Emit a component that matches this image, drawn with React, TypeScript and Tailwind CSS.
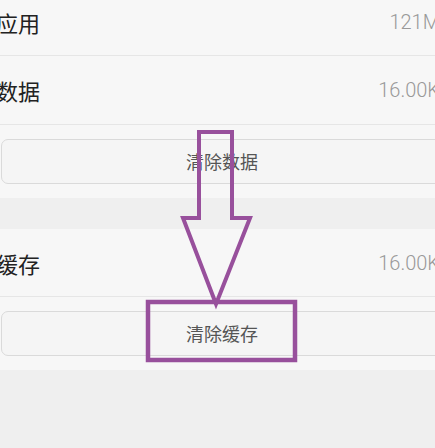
const CJK = { fontFamily: '"Noto Sans CJK SC", "Noto Sans", sans-serif' };

function Row({ label, value, last }: { label: string; value: string; last?: boolean }) {
  return (
    <div className={`flex items-center justify-between h-[68px] pr-[8px] ${last ? '' : 'border-b border-[#e6e6e6]'}`}>
      <span className="text-[22px] text-[#222] leading-none">{label}</span>
      <span className="text-[20px] text-[#999] leading-none" style={{ fontFamily: 'Roboto, "Noto Sans", sans-serif', fontWeight: 300 }}>{value}</span>
    </div>
  );
}

function ClearButton({ text }: { text: string }) {
  return (
    <div className="py-[14px] px-[5px]">
      <div className="h-[45px] rounded-[7px] border border-[#dadada] bg-[#f5f5f5] flex items-center justify-center text-[18px] text-[#555]">
        {text}
      </div>
    </div>
  );
}

export default function App() {
  return (
    <div className="relative w-[435px] h-[448px] overflow-hidden bg-[#efefef]" style={CJK}>
      <div className="w-[452px] ml-[-4px] mt-[-12px]">
        <div className="bg-[#f7f7f7]">
          <Row label="应用" value="121M" />
          <Row label="数据" value="16.00K" last />
          <div className="border-t border-[#e6e6e6]" />
          <ClearButton text="清除数据" />
        </div>
        <div className="h-[31px]" />
        <div className="bg-[#f7f7f7]">
          <Row label="缓存" value="16.00K" />
          <ClearButton text="清除缓存" />
        </div>
      </div>

      <svg className="absolute left-0 top-0 pointer-events-none" width="435" height="448" viewBox="0 0 435 448">
        <path
          d="M199 132 L232 132 L232 218 L250 218 L216 304 L183 218 L199 218 Z"
          fill="none"
          stroke="#98509c"
          strokeWidth="4"
          strokeLinejoin="miter"
        />
        <rect x="148" y="302" width="147" height="58" fill="none" stroke="#98509c" strokeWidth="4.5" />
      </svg>
    </div>
  );
}
